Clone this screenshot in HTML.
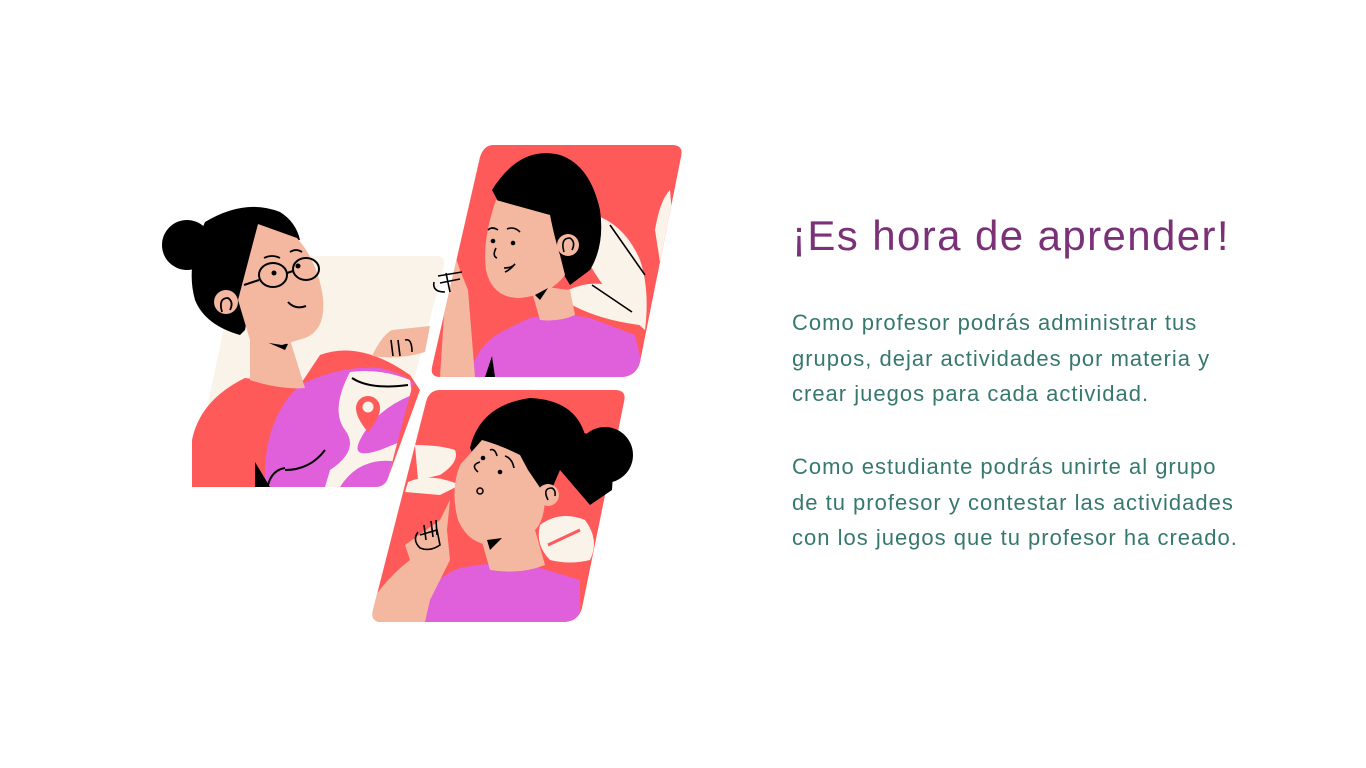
<!DOCTYPE html>
<html><head><meta charset="utf-8"><style>
html,body{margin:0;padding:0;background:#fff;}
body{width:1366px;height:768px;position:relative;overflow:hidden;font-family:"Liberation Sans",sans-serif;}
h1{position:absolute;left:792px;top:212px;margin:0;font-weight:normal;font-size:42px;color:#7B3178;letter-spacing:1.4px;white-space:nowrap;}
.p{position:absolute;left:792px;margin:0;font-size:22px;line-height:35.5px;color:#37786E;letter-spacing:1px;white-space:nowrap;}
svg{position:absolute;left:0;top:0;}
</style></head><body>
<svg width="1366" height="768" viewBox="0 0 1366 768">
<defs>
<clipPath id="ca"><path d="M245,256 L436,256 Q446,256 444,266 L388,478 Q385,487 375,487 L200,487 Q192,487 192,478 L238,262 Q240,256 245,256Z"/></clipPath>
<clipPath id="cb"><path d="M493,145 L672,145 Q684,145 681,157 L640,362 Q636,377 620,377 L440,377 Q430,377 432,367 L480,157 Q484,145 493,145Z"/></clipPath>
<clipPath id="cc"><path d="M440,390 L615,390 Q627,390 624,402 L582,608 Q578,622 563,622 L382,622 Q370,622 373,610 L426,402 Q429,390 440,390Z"/></clipPath>
</defs>
<path d="M245,256 L436,256 Q446,256 444,266 L388,478 Q385,487 375,487 L200,487 Q192,487 192,478 L238,262 Q240,256 245,256Z" fill="#FAF3EA"/>
<path d="M192,487 L192,440 Q200,400 245,378 L300,385 L320,355 Q360,340 410,375 L420,390 L388,478 Q385,487 375,487Z" fill="#FF5A5A"/>
<g clip-path="url(#ca)">
<path d="M265,487 Q262,420 300,385 Q340,365 380,368 Q410,375 420,390 L400,487Z" fill="#E05FDB"/>
<path d="M350,372 Q330,410 345,430 Q360,450 330,470 L325,487 L400,487 L405,440 L380,450 Q350,460 360,440 Q375,410 412,395 L410,380 Q380,368 350,372Z" fill="#FAF3EA"/>
<path d="M340,487 Q360,455 400,462 L410,487Z" fill="#E05FDB"/>
<path d="M352,378 Q370,390 408,385" stroke="#000" stroke-width="2" fill="none"/>
<path d="M285,470 Q310,470 325,450" stroke="#000" stroke-width="2" fill="none"/>
<path d="M268,485 Q272,470 285,468" stroke="#000" stroke-width="2" fill="none"/>
<path d="M255,462 L270,487 L255,487Z" fill="#000"/>
</g>
<path d="M368,432 Q356,418 356,408 A12,12 0 0 1 380,408 Q380,418 368,432Z" fill="#FF5A5A"/>
<circle cx="368" cy="407" r="5.5" fill="#FAF3EA"/>
<path d="M250,330 L290,340 L305,388 Q280,390 250,380Z" fill="#F4B7A0"/>
<path d="M262,340 L288,344 L285,350Z" fill="#000"/>
<circle cx="187" cy="245" r="25" fill="#000"/>
<path d="M205,222 Q245,198 280,212 Q296,222 300,240 L262,240 L245,330 L240,335 Q205,325 195,300 Q185,265 205,222Z" fill="#000"/>
<path d="M258,224 L297,238 Q318,262 323,298 Q326,330 305,338 L282,345 L250,340 L238,300 Z" fill="#F4B7A0"/>
<circle cx="226" cy="302" r="12" fill="#F4B7A0"/>
<path d="M222,312 Q218,298 228,298 Q234,302 230,310" stroke="#000" stroke-width="1.8" fill="none"/>
<ellipse cx="273" cy="275" rx="14" ry="12" fill="none" stroke="#000" stroke-width="2"/>
<ellipse cx="306" cy="269" rx="13" ry="11" fill="none" stroke="#000" stroke-width="2"/>
<path d="M259,280 L244,285 M287,273 L293,271" stroke="#000" stroke-width="2"/>
<circle cx="274" cy="273" r="2.5"/><circle cx="298" cy="266" r="2.5"/>
<path d="M264,258 Q272,254 280,258 M290,252 Q296,248 302,252" stroke="#000" stroke-width="1.8" fill="none"/>
<path d="M288,302 Q295,310 306,306" stroke="#000" stroke-width="2" fill="none"/>
<path d="M372,356 Q382,335 392,330 L430,326 L425,352 Q400,360 372,356Z" fill="#F4B7A0"/>
<path d="M391,340 L393,356 M398,340 L400,356 M405,340 Q412,338 412,352" stroke="#000" stroke-width="1.6" fill="none"/>
<path d="M493,145 L672,145 Q684,145 681,157 L640,362 Q636,377 620,377 L440,377 Q430,377 432,367 L480,157 Q484,145 493,145Z" fill="#FF5A5A"/>
<g clip-path="url(#cb)">
<path d="M595,215 Q625,225 640,260 Q650,290 645,330 Q610,300 590,265Z" fill="#FAF3EA"/>
<path d="M568,290 Q600,275 630,295 L640,325 Q600,320 572,305Z" fill="#FAF3EA"/>
<path d="M655,230 Q660,200 670,190 L675,250 L662,275Z" fill="#FAF3EA"/>
<path d="M610,225 L645,275 M592,285 L632,312" stroke="#000" stroke-width="1.6"/>
<path d="M470,377 Q475,345 505,330 L530,318 Q560,312 590,318 L635,335 L645,377Z" fill="#E05FDB"/>
<path d="M485,377 L492,356 L495,377Z" fill="#000"/>
<path d="M530,285 L540,320 Q560,322 575,315 L570,290Z" fill="#F4B7A0"/>
<path d="M492,190 Q520,145 560,155 Q590,165 600,210 Q605,245 590,270 L570,285 L555,260 L550,215 L500,205Z" fill="#000"/>
<path d="M496,200 L550,215 Q555,240 560,255 L565,275 Q550,295 520,298 Q492,298 486,270 Q482,240 496,200Z" fill="#F4B7A0"/>
<path d="M535,295 L548,288 L540,300Z" fill="#000"/>
<circle cx="568" cy="245" r="11" fill="#F4B7A0"/>
<path d="M564,252 Q560,238 570,238 Q576,242 572,250" stroke="#000" stroke-width="1.6" fill="none"/>
<circle cx="493" cy="241" r="2.3"/><circle cx="513" cy="243" r="2.3"/>
<path d="M488,230 Q492,226 498,230 M507,229 Q514,226 520,232" stroke="#000" stroke-width="1.6" fill="none"/>
<path d="M496,248 Q492,256 497,258 M504,268 Q512,268 515,264 Q510,270 505,272" stroke="#000" stroke-width="1.6" fill="none"/>
<path d="M440,377 L445,300 Q435,285 440,275 L452,268 L455,255 L460,270 L468,290 L475,377Z" fill="#F4B7A0"/>
</g>
<path d="M434,282 Q432,292 445,292 M438,276 L462,272 M440,283 L460,279 M446,273 L450,292" stroke="#000" stroke-width="1.6" fill="none"/>
<path d="M440,390 L615,390 Q627,390 624,402 L582,608 Q578,622 563,622 L382,622 Q370,622 373,610 L426,402 Q429,390 440,390Z" fill="#FF5A5A"/>
<g clip-path="url(#cc)">
<path d="M415,445 Q440,445 455,450 Q460,462 440,475 L418,480Z" fill="#FAF3EA"/>
<path d="M408,482 Q430,472 460,485 L440,495 L405,492Z" fill="#FAF3EA"/>
<path d="M540,525 Q560,510 585,520 Q600,540 590,560 Q570,565 550,560 Q535,545 540,525Z" fill="#FAF3EA"/>
<path d="M548,545 L580,530" stroke="#FF5A5A" stroke-width="3"/>
<path d="M420,622 Q425,580 460,568 Q500,560 530,565 L580,580 L580,622Z" fill="#E05FDB"/>
<path d="M413,622 L420,595 L425,622Z" fill="#000"/>
<path d="M370,622 L372,600 Q390,575 410,560 L405,545 L440,520 L450,500 L447,530 L450,560 L430,600 L425,622Z" fill="#F4B7A0"/>
<path d="M480,535 L490,570 Q520,575 545,565 L535,530Z" fill="#F4B7A0"/>
<path d="M470,448 Q480,405 530,398 Q575,400 585,435 L560,470 L545,505 L520,470 L478,465Z" fill="#000"/>
</g>
<circle cx="605" cy="455" r="28" fill="#000"/>
<path d="M570,430 L615,440 L612,490 L590,505 L560,470Z" fill="#000"/>
<g clip-path="url(#cc)">
<path d="M482,440 Q500,445 520,455 L528,470 L545,495 Q545,520 535,530 L500,545 Q470,548 458,520 Q450,490 460,465Z" fill="#F4B7A0"/>
<path d="M487,540 L502,538 L490,550Z" fill="#000"/>
<circle cx="548" cy="495" r="11" fill="#F4B7A0"/>
<path d="M548,500 Q542,488 552,488 Q556,490 555,496" stroke="#000" stroke-width="1.6" fill="none"/>
</g>
<circle cx="483" cy="458" r="2.3"/><circle cx="500" cy="472" r="2.3"/>
<path d="M478,472 Q470,465 480,462 M490,450 Q495,448 497,456 M505,456 Q512,458 514,468" stroke="#000" stroke-width="1.6" fill="none"/>
<circle cx="480" cy="491" r="3" fill="none" stroke="#000" stroke-width="1.5"/>
<path d="M420,535 L437,530 L440,545 Q430,552 420,548 Q412,540 418,532 M424,525 L426,540 M431,521 L433,537 M436,520 L437,535" stroke="#000" stroke-width="1.6" fill="none"/>
</svg>
<h1>¡Es hora de aprender!</h1>
<p class="p" style="top:305px">Como profesor podrás administrar tus<br>grupos, dejar actividades por materia y<br>crear juegos para cada actividad.</p>
<p class="p" style="top:449px">Como estudiante podrás unirte al grupo<br>de tu profesor y contestar las actividades<br>con los juegos que tu profesor ha creado.</p>
</body></html>
